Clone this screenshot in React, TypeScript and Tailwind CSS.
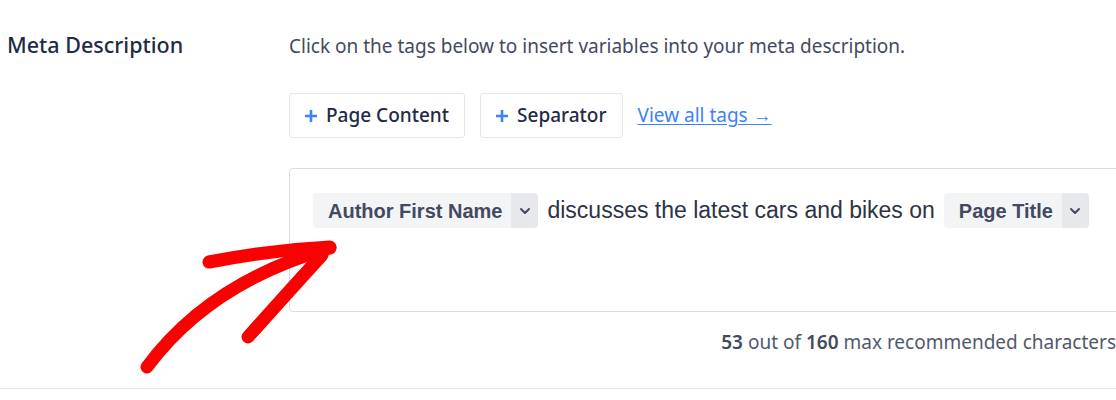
import React from 'react';

function Plus() {
  return (
    <svg width="12" height="12" viewBox="0 0 12 12" className="shrink-0">
      <path d="M6 1v10M1 6h10" stroke="#3b82f6" strokeWidth="2.6" strokeLinecap="square" />
    </svg>
  );
}

function Chevron() {
  return (
    <svg width="14" height="14" viewBox="0 0 14 14">
      <path d="M3 5l4 4 4-4" stroke="#434960" strokeWidth="2" fill="none" strokeLinecap="round" strokeLinejoin="round" />
    </svg>
  );
}

function TagPill({ label }: { label: string }) {
  return (
    <span className="inline-flex h-[35px] items-stretch overflow-hidden rounded-[4px] bg-[#f3f4f6] align-middle">
      <span className="flex items-center pl-[15px] pr-[9px] text-[20px] font-bold text-[#434960]">{label}</span>
      <span className="flex w-[27px] items-center justify-center bg-[#e6e8ec]">
        <Chevron />
      </span>
    </span>
  );
}

function AddButton({ label }: { label: string }) {
  return (
    <button className="flex h-[45px] items-center gap-[9px] rounded-[3px] border border-[#e4e6ea] bg-white px-[15px] text-[19px] font-medium text-[#1f2a44]">
      <Plus />
      {label}
    </button>
  );
}

export default function App() {
  return (
    <div className="relative h-[400px] w-[1116px] overflow-hidden bg-white font-['Noto_Sans',sans-serif]">
      <div className="flex h-[389px] border-b border-[#e5e7eb]">
        <div className="w-[289px] shrink-0 pl-[7px] pt-[29px] text-[21.5px] font-medium text-[#1f2a44]">Meta Description</div>
        <div className="w-[860px] shrink-0 pt-[32px]">
          <p className="text-[19px] leading-[28px] text-[#434960]">Click on the tags below to insert variables into your meta description.</p>
          <div className="mt-[33px] flex items-center gap-[15px]">
            <AddButton label="Page Content" />
            <AddButton label="Separator" />
            <a href="#" className="text-[19px] text-[#3b82f6] underline underline-offset-2">View all tags →</a>
          </div>
          <div className="mt-[30px] h-[144px] rounded-[4px] border border-[#d9dce2] px-[23px] pt-[24px]">
            <div className="flex items-center gap-[9px] font-['Liberation_Sans',Arial,sans-serif] text-[23px] text-[#2c3345]">
              <TagPill label="Author First Name" />
              <span>discusses the latest cars and bikes on</span>
              <TagPill label="Page Title" />
            </div>
          </div>
          <p className="mt-[16px] w-[827px] text-right text-[19px] text-[#50596c]">
            <span className="font-semibold text-[#434960]">53</span> out of <span className="font-semibold text-[#434960]">160</span> max recommended characters
          </p>
        </div>
      </div>
      <svg className="pointer-events-none absolute left-0 top-0" width="1116" height="400" viewBox="0 0 1116 400">
        <g stroke="#fa0000" strokeWidth="13" fill="none" strokeLinecap="round" strokeLinejoin="round">
          <path d="M147 367 Q210 282 330 248" />
          <path d="M209 262 Q270 250 330 247" />
          <path d="M248 337 Q290 290 322 255" />
        </g>
      </svg>
    </div>
  );
}
